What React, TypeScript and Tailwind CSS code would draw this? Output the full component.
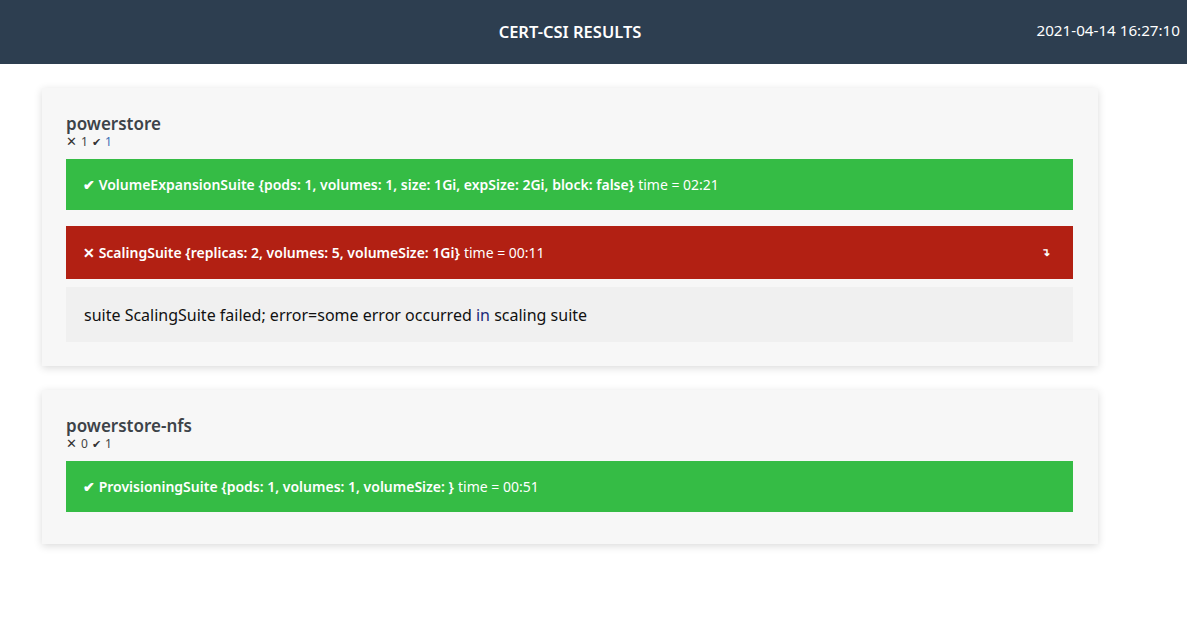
import React from "react";

const font = { fontFamily: '"Noto Sans", "Open Sans", sans-serif' };

function Counts({ fail, pass, blue }: { fail: number; pass: number; blue?: boolean }) {
  return (
    <div className="mt-[1px] flex h-[13px] items-center gap-[4px] text-[12px] leading-[13px] text-[#444]">
      <span className="text-[13px] leading-[13px] text-[#333]">✕</span>
      <span>{fail}</span>
      <span className="text-[11px] leading-[13px] text-[#333]">✔</span>
      <span className={blue ? "text-[#3b6fb5]" : ""}>{pass}</span>
    </div>
  );
}

function Pass({ name, params, time }: { name: string; params: string; time: string }) {
  return (
    <div className="flex h-[51px] items-center bg-[#35bc45] px-[17px] text-[14px] text-white">
      <span className="font-semibold">✔ {name} {params}</span>
      <span className="ml-[4px]">time = {time}</span>
    </div>
  );
}

export default function App() {
  return (
    <div className="min-h-[631px] bg-white" style={font}>
      <div className="relative flex h-[64px] items-center justify-center bg-[#2d3e50]">
        <span className="ml-[-47px] text-[16.5px] font-semibold text-white">CERT-CSI RESULTS</span>
        <span className="absolute right-[7px] top-[19px] text-[15.2px] text-white">2021-04-14 16:27:10</span>
      </div>
      <div className="ml-[42px] flex w-[1056px] flex-col gap-[24px] pt-[24px]">
        <div className="bg-[#f7f7f7] pb-[24px] pl-[24px] pr-[25px] pt-[26px] shadow-[0_2px_8px_rgba(0,0,0,0.15)]">
          <div className="text-[17px] font-semibold leading-[20px] text-[#3d4349]">powerstore</div>
          <Counts fail={1} pass={1} blue />
          <div className="mt-[11px] flex flex-col">
            <Pass
              name="VolumeExpansionSuite"
              params="{pods: 1, volumes: 1, size: 1Gi, expSize: 2Gi, block: false}"
              time="02:21"
            />
            <div className="mt-[16px] flex h-[53px] items-center justify-between bg-[#b22013] px-[17px] text-[14px] text-white">
              <div>
                <span className="font-semibold">✕ ScalingSuite {"{replicas: 2, volumes: 5, volumeSize: 1Gi}"}</span>
                <span className="ml-[4px]">time = 00:11</span>
              </div>
              <span className="mr-[6px] text-[11px] font-bold">↴</span>
            </div>
            <div className="mt-[8px] flex h-[55px] items-center bg-[#f0f0f0] px-[18px] text-[16px] text-[#111]">
              <span>
                suite ScalingSuite failed; error=some error occurred <span className="text-[#1b2a7a]">in</span> scaling suite
              </span>
            </div>
          </div>
        </div>
        <div className="bg-[#f7f7f7] pb-[32px] pl-[24px] pr-[25px] pt-[26px] shadow-[0_2px_8px_rgba(0,0,0,0.15)]">
          <div className="text-[17px] font-semibold leading-[20px] text-[#3d4349]">powerstore-nfs</div>
          <Counts fail={0} pass={1} />
          <div className="mt-[11px] flex flex-col">
            <Pass name="ProvisioningSuite" params="{pods: 1, volumes: 1, volumeSize: }" time="00:51" />
          </div>
        </div>
      </div>
    </div>
  );
}
